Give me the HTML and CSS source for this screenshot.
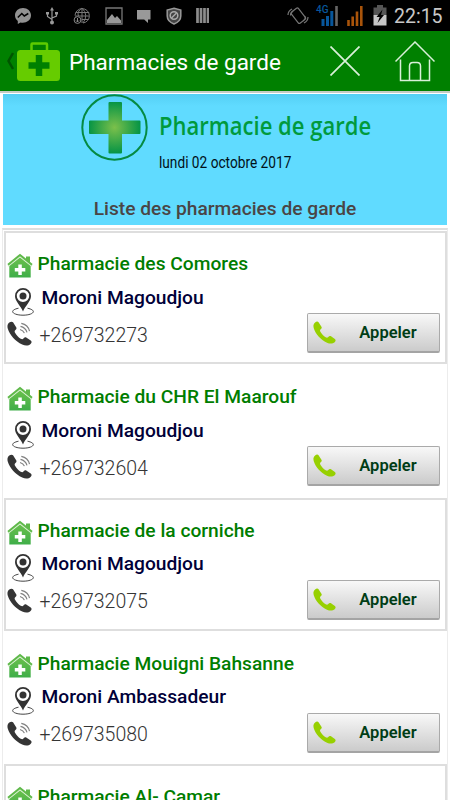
FILE: index.html
```html
<!DOCTYPE html>
<html lang="fr">
<head>
<meta charset="utf-8">
<title>Pharmacies de garde</title>
<link rel="stylesheet" href="styles.css">
</head>
<body>
<svg class="defs" width="0" height="0" aria-hidden="true">
  <defs>
    <linearGradient id="leaf" x1="0" y1="0" x2="0" y2="1"><stop offset="0" stop-color="#6ac04c"/><stop offset="1" stop-color="#3fae49"/></linearGradient>
    <radialGradient id="glow" gradientUnits="userSpaceOnUse" cx="33.5" cy="33.5" r="27"><stop offset="0" stop-color="#7cc04b"/><stop offset="1" stop-color="#009245"/></radialGradient>
    <symbol id="pharmacy" viewBox="0 0 26 25">
      <path fill="#5fb94a" d="M19 3.500h4V10l-4-3.500z"/>
      <path fill="url(#leaf)" d="M2.300 12.500 13 4l10.700 8.500v12H2.300z"/>
      <path d="M1 13.300 13 3.700l12 9.600" fill="none" stroke="#d9f0d2" stroke-width="1.400"/>
      <path d="M1 11.800 13 2l12 9.800" fill="none" stroke="#5fb94a" stroke-width="2"/>
      <path fill="#fff" d="M11.300 11.500h3.500V15h3.500v3.500h-3.500V22h-3.500v-3.500H7.800V15h3.500z"/>
    </symbol>
    <symbol id="pin" viewBox="0 0 22 29">
      <path d="M6.500 21.200C-4 23.500 1 28.200 11 28.200s15-4.700 4.500-7" fill="none" stroke="#444" stroke-width="1"/>
      <path fill="#333" fill-rule="evenodd" d="M11 24.500C9 19 3 14.500 3 9a8 8 0 0 1 16 0c0 5.500-6 10-8 15.500zM11 2.700a6.200 6.200 0 1 0 0 12.400A6.200 6.200 0 0 0 11 2.700z"/>
      <circle cx="11" cy="8.900" r="3.500" fill="#333"/>
    </symbol>
    <symbol id="handset" viewBox="0 0 24 24">
      <path fill="currentColor" d="M2.200 1.500C3.300.5 5 .2 5.800 1.300l3 4.700c.7 1.200.2 2-.7 2.700-1 .8-1 1.500-.2 2.800 1.300 2.200 3.200 4.300 5.300 5.500 1.200.7 2 .6 2.800-.4.800-1 1.700-1.300 2.800-.6l4 2.700c1.200.9 1 2.200-.2 3.400-1.800 1.700-4.800 2-8 .5C8 19.600 2.500 13.300.8 7.500.1 5 .4 3.100 2.200 1.500z"/>
    </symbol>
    <symbol id="ringing" viewBox="0 0 26 26">
      <svg width="25" height="25" x="0" y="1" viewBox="0 0 24 24"><use href="#handset"/></svg>
      <path d="M13 9.500c2.300.5 3.600 1.600 4.400 3.600M13.500 6.300c3.500.8 5.500 2.700 6.500 6M14.300 3.300c4.500.8 7.300 3.500 8.200 7.900" fill="none" stroke="#808080" stroke-width="1.200"/>
    </symbol>
  </defs>
</svg>

<header class="status">
  <div class="notices">
    <svg width="18" height="18" viewBox="0 0 18 18"><path fill="#929292" d="M9 1C4.500 1 1 4.200 1 8.300c0 2.300 1 4.300 2.800 5.600V17l2.700-1.500c4.800 1.300 10.500-1.700 10.500-7.200C17 4.200 13.500 1 9 1z"/><path d="m3.800 10.500 4-4 2.500 2.500 4-2.500" fill="none" stroke="#000" stroke-width="1.500"/></svg>
    <svg width="12" height="18" viewBox="0 0 12 18"><path d="M6 2v14M1.500 6v3.500L6 12.500m4.500-6.500v3L6 11" fill="none" stroke="#999" stroke-width="1.200"/><path fill="#999" d="m6 0 2 3.500H4zM0 5h3v2.500H0zM9 5h3v2.500H9z"/><circle cx="6" cy="15.500" r="2" fill="#999"/></svg>
    <svg width="18" height="18" viewBox="0 0 18 18"><path d="M2 8.500A7.200 7.200 0 1 1 10 16M2.800 5.500h13.400M9 1v15M2 9h14M9 12.500h6.500M9 1Q3.500 5 5.500 9M9 1q7 7 1 15" fill="none" stroke="#777" stroke-width="1"/><circle cx="4.500" cy="13" r="3.400" fill="#000" stroke="#888"/><path d="M4.500 11v4m-1.500-1.500L4.500 15 6 13.500" fill="none" stroke="#888"/></svg>
    <svg width="18" height="18" viewBox="0 0 18 18"><path d="M1 1h16v16H1z" fill="none" stroke="#777" stroke-width="1.300"/><path fill="#999" d="M2 16v-3l5-6 3 4 2-2 4 4.500V16z"/></svg>
    <svg width="14" height="18" viewBox="0 0 14 18"><path fill="#999" d="M0 3h13.500v9.500H11V16l-3.800-3.500H0z"/></svg>
    <svg width="16" height="18" viewBox="0 0 16 18"><path d="M8 1.200 14.800 3v6c0 4-3 6.500-6.800 8-3.800-1.500-6.800-4-6.800-8V3z" fill="#444" stroke="#999" stroke-width="1.500"/><circle cx="8" cy="8.500" r="3.800" fill="none" stroke="#aaa" stroke-width="1.500"/><path d="m5.500 11 5-5" stroke="#aaa" stroke-width="1.500"/></svg>
    <svg width="13" height="18" viewBox="0 0 13 18"><path d="M1.500 1v15M5 1v15M8.500 1v15M12 1v15" stroke="#8d8d8d" stroke-width="2.700"/></svg>
  </div>
  <div class="system">
    <svg class="vibrate" width="22" height="20" viewBox="0 0 22 20"><g fill="none" stroke="#777" stroke-width="1.200"><rect x="7" y="3" width="9" height="14" rx="1.500" transform="rotate(-38 11 10)"/><path d="M1 9c0-3 2-5 4-6M3.500 9.500c0-2 1-3.500 2.500-4.500M21 11c0 3-2 5-4 6M18.500 10.500c0 2-1 3.500-2.500 4.500"/></g></svg>
    <div class="signal"><span class="net">4G</span>
      <svg width="22" height="20" viewBox="0 0 22 20"><path d="M7 20v-7M11.500 20V10M15.800 20V5" stroke="#07569b" stroke-width="3"/><path d="M20.500 20V0" stroke="#666" stroke-width="2.600"/></svg></div>
    <svg class="bars" width="16" height="20" viewBox="0 0 16 20"><path d="M1.500 20v-6M5.700 20v-9.500M10 20V5.500M14.300 20V0" stroke="#a9540a" stroke-width="2.600"/></svg>
    <svg class="battery" width="14" height="21" viewBox="0 0 14 21"><path fill="#555" d="M4 0h6v2.500h3.500V10H.5V2.500H4z"/><path fill="#c6c6c6" d="M.5 10h13v10.500H.5z"/><path fill="#000" d="M9.500 4.500 3.500 12h3.200L4.500 18l6.500-8H8z"/></svg>
    <span class="clock">22:15</span>
  </div>
</header>

<nav class="appbar">
  <svg class="back" width="9" height="18" viewBox="0 0 9 18"><path d="M8 1 3.500 9 8 17" fill="none" stroke="#005500" stroke-width="2.500"/></svg>
  <svg class="kit" width="43" height="40" viewBox="0 0 43 40"><path d="M14.500 9V2.500Q14.500 1.500 15.500 1.500h13.500Q30 1.500 30 2.500V9" fill="none" stroke="#5ecb00" stroke-width="2.500"/><rect y="8" width="43" height="31" rx="3.500" fill="#66cc00"/><path d="M22 13v21M11.500 23.500h21" stroke="#008000" stroke-width="6.500"/></svg>
  <h1>Pharmacies de garde</h1>
  <svg class="close" width="30" height="30" viewBox="0 0 30 30"><path d="m.5.5 29 29m0-29-29 29" stroke="#d9f0d9" stroke-width="1.700"/></svg>
  <svg class="home" width="40" height="41" viewBox="0 0 40 41"><path d="M.5 20.500 20 1l19.500 19.500M5.500 18.500V39.500h29V18.500M14.500 39V25q0-3.500 3.500-3.500h4q3.500 0 3.500 3.500v14" fill="none" stroke="#d9f0d9" stroke-width="1.500"/></svg>
</nav>

<main>
  <section class="banner">
    <div class="brand">
      <svg width="67" height="67" viewBox="0 0 67 67"><circle cx="33.500" cy="33.500" r="32.200" fill="none" stroke="#058a42" stroke-width="2"/><path fill="url(#glow)" d="M28.500 8h11.500q1 0 1 1v17.500h17.500q1 0 1 1V39q0 1-1 1H41v18.500q0 1-1 1H28.500q-1 0-1-1V40H9q-1 0-1-1V27.500q0-1 1-1h18.500V9q0-1 1-1z"/></svg>
      <div class="words"><div class="logo"><span>Pharmacie de garde</span></div><div class="date"><span>lundi 02 octobre 2017</span></div></div>
    </div>
    <h2>Liste des pharmacies de garde</h2>
  </section>
  <div class="list">
    <article class="card framed">
      <div class="name"><svg><use href="#pharmacy"/></svg><span>Pharmacie des Comores</span></div>
      <div class="place"><svg><use href="#pin"/></svg><span>Moroni Magoudjou</span></div>
      <div class="contact"><svg><use href="#ringing"/></svg><span>+269732273</span><button><svg><use href="#handset"/></svg><b>Appeler</b></button></div>
    </article>
    <article class="card">
      <div class="name"><svg><use href="#pharmacy"/></svg><span>Pharmacie du CHR El Maarouf</span></div>
      <div class="place"><svg><use href="#pin"/></svg><span>Moroni Magoudjou</span></div>
      <div class="contact"><svg><use href="#ringing"/></svg><span>+269732604</span><button><svg><use href="#handset"/></svg><b>Appeler</b></button></div>
    </article>
    <article class="card framed">
      <div class="name"><svg><use href="#pharmacy"/></svg><span>Pharmacie de la corniche</span></div>
      <div class="place"><svg><use href="#pin"/></svg><span>Moroni Magoudjou</span></div>
      <div class="contact"><svg><use href="#ringing"/></svg><span>+269732075</span><button><svg><use href="#handset"/></svg><b>Appeler</b></button></div>
    </article>
    <article class="card">
      <div class="name"><svg><use href="#pharmacy"/></svg><span>Pharmacie Mouigni Bahsanne</span></div>
      <div class="place"><svg><use href="#pin"/></svg><span>Moroni Ambassadeur</span></div>
      <div class="contact"><svg><use href="#ringing"/></svg><span>+269735080</span><button><svg><use href="#handset"/></svg><b>Appeler</b></button></div>
    </article>
    <article class="card framed">
      <div class="name"><svg><use href="#pharmacy"/></svg><span>Pharmacie Al- Camar</span></div>
    </article>
  </div>
</main>
</body>
</html>
```

FILE: styles.css
```css
* { box-sizing: border-box; }
html, body { height: 800px; overflow: hidden; }
body { margin: 0; background: #fff; font-family: Roboto, "Liberation Sans", sans-serif; display: flex; flex-direction: column; }
svg { display: block; flex: none; }
.defs { position: absolute; }

.status { height: 31px; flex: none; background: #000; display: flex; justify-content: space-between; padding: 0 7px 0 14px; }
.notices { display: flex; align-items: center; padding-top: 1px; width: 195px; justify-content: space-between; }
.system { display: flex; align-items: center; }
.signal { display: flex; margin-left: 7px; position: relative; }
.net { position: absolute; left: 0; top: -2px; font-size: 10px; line-height: 12px; font-weight: 500; color: #07569b; }
.bars { margin-left: 9px; }
.battery { margin-left: 10px; }
.clock { margin-left: 7px; width: 49px; font-size: 19.5px; line-height: 31px; color: #c8c8c8; white-space: nowrap; padding-top: 2px; }

.appbar { height: 60px; flex: none; background: #008000; display: flex; align-items: center; padding: 0 15px 0 5px; }
.kit { margin-left: 3px; margin-top: 2px; }
h1 { margin: 0 0 0 9px; flex: 1; font-size: 22.5px; line-height: 30px; font-weight: 400; color: #fff; white-space: nowrap; padding-top: 1px; }
.close { margin-right: 35px; }

main { flex: 1; min-height: 0; overflow: hidden; border-top: 2px solid #c4cbc4; padding: 1px 3px 0; }
.banner { height: 131px; background: linear-gradient(#54cff4, #60dbff 12px); }
.brand { display: flex; padding: 0 0 0 78px; height: 92px; }
.words { margin-left: 11px; }
.logo { height: 44px; padding-top: 14px; font: 600 26px/34px "Open Sans", sans-serif; color: #009a3d; white-space: nowrap; width: 212px; }
.logo span { display: inline-block; transform: scaleX(.847); transform-origin: 0 50%; }
.date { margin-top: 14px; font-size: 17px; line-height: 20px; color: #001018; white-space: nowrap; }
.date span { display: inline-block; transform: scaleX(.805); transform-origin: 0 50%; }
h2 { margin: 11px 0 0; text-align: center; font-size: 19.2px; line-height: 24px; font-weight: 500; color: #4a4545; }

.list { margin: 3px -1px 0 -1px; border: 1px solid #ececec; border-top: 2px solid #dedede; padding: 1px 0 0 1px; }
.card { height: 133.3px; padding: 18px 5px 0 1.5px; border: 2px solid transparent; }
.framed { border-color: #dedede; }
.name, .place, .contact { display: flex; align-items: center; white-space: nowrap; }
.name { height: 25px; font-size: 19.2px; font-weight: 500; color: #007d00; }
.name svg { width: 26px; height: 25px; margin: 4px 4px 0 -1px; }
.name span { margin-left: 1px; }
.place { height: 29px; margin-top: 10px; padding-left: 5px; font-size: 19.2px; font-weight: 500; color: #000038; }
.place svg { width: 22px; height: 29px; margin: 1px 8px 0 -1px; }
.place span { padding-bottom: 7px; }
.contact { height: 40px; margin-top: -2px; color: #353535; font-size: 19.5px; font-weight: 300; }
.contact > svg { width: 26px; height: 26px; margin: 0 7px 0 -1px; }
.contact > span { padding-top: 4px; }
button { margin-left: auto; width: 133px; height: 40px; padding: 0 5px; display: flex; align-items: center; border: 1px solid #aaa; border-bottom: 2px solid #a4a4a4; border-radius: 2px; background: linear-gradient(#f8f8f8, #cbcbcb); font-family: inherit; }
button svg { width: 23px; height: 23px; color: #97d000; }
button b { flex: 1; margin-left: 6px; text-align: center; font-size: 16.5px; font-weight: 600; color: #003d16; }
```
